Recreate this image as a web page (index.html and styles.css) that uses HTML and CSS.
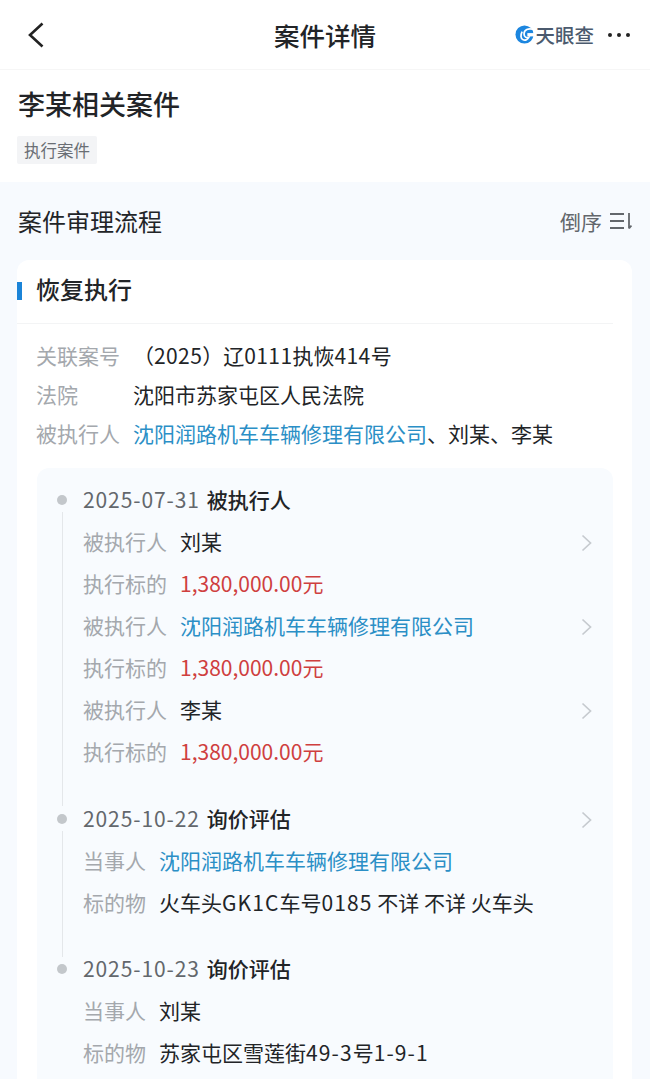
FILE: index.html
```html
<!DOCTYPE html>
<html lang="zh-CN">
<head>
  <meta charset="UTF-8" />
  <meta name="viewport" content="width=device-width, initial-scale=1.0" />
  <title>案件详情</title>
  <link rel="stylesheet" href="styles.css">
</head>
<body>
  <header class="topbar">
    <div class="topbar-left">
      <svg class="back-icon" viewBox="0 0 18 26"><path d="M15.5 1.5 3 13l12.5 11.5" /></svg>
    </div>
    <h1 class="topbar-title">案件详情</h1>
    <div class="topbar-right">
      <svg class="brand-logo" viewBox="0 0 20 20">
        <circle cx="10" cy="10" r="9.5" fill="#1c86df" />
        <path d="M19 4.5C14 3 9.500 5 9.500 9.500c0 3 2.500 4.500 5 3.500-1 2-3.500 3.500-6 2.500C5.500 14.500 6 10 7.500 7" fill="none" stroke="#fff" stroke-width="1.800" />
        <path d="M13 8.500h7v3.500h-7z" fill="#fff" />
      </svg>
      <span class="brand-name">天眼查</span>
      <span class="more-dots"><i></i><i></i><i></i></span>
    </div>
  </header>

  <section class="summary">
    <h2 class="summary-title">李某相关案件</h2>
    <span class="tag">执行案件</span>
  </section>

  <main class="process">
    <div class="process-head">
      <h3 class="process-title">案件审理流程</h3>
      <div class="sort">
        <span>倒序</span>
        <svg class="sort-icon" viewBox="0 0 23 18">
          <path d="M1 2h14M1 9h14M1 16h14" />
          <path d="M20 1v15.500M20 16.500l2.500-3" />
        </svg>
      </div>
    </div>

    <div class="card">
      <div class="card-head">
        <span class="card-mark"></span>
        <h4 class="card-title">恢复执行</h4>
      </div>

      <div class="info">
        <div class="info-row">
          <span class="label info-label">关联案号</span>
          <span class="value">（<span class="num">2025</span>）辽<span class="num">0111</span>执恢<span class="num">414</span>号</span>
        </div>
        <div class="info-row">
          <span class="label info-label">法院</span>
          <span class="value">沈阳市苏家屯区人民法院</span>
        </div>
        <div class="info-row">
          <span class="label info-label">被执行人</span>
          <span class="value"><span class="link">沈阳润路机车车辆修理有限公司</span>、刘某、李某</span>
        </div>
      </div>

      <div class="timeline">
        <div class="event">
          <div class="row event-head">
            <span class="date">2025-07-31</span>
            <span class="event-name">被执行人</span>
          </div>
          <div class="row">
            <span class="label">被执行人</span>
            <span class="value">刘某</span>
            <svg class="chevron" viewBox="0 0 11 18"><path d="M1.500 1.500 9.500 9l-8 7.500" /></svg>
          </div>
          <div class="row">
            <span class="label">执行标的</span>
            <span class="value money">1,380,000.00元</span>
          </div>
          <div class="row">
            <span class="label">被执行人</span>
            <span class="value link">沈阳润路机车车辆修理有限公司</span>
            <svg class="chevron" viewBox="0 0 11 18"><path d="M1.500 1.500 9.500 9l-8 7.500" /></svg>
          </div>
          <div class="row">
            <span class="label">执行标的</span>
            <span class="value money">1,380,000.00元</span>
          </div>
          <div class="row">
            <span class="label">被执行人</span>
            <span class="value">李某</span>
            <svg class="chevron" viewBox="0 0 11 18"><path d="M1.500 1.500 9.500 9l-8 7.500" /></svg>
          </div>
          <div class="row">
            <span class="label">执行标的</span>
            <span class="value money">1,380,000.00元</span>
          </div>
        </div>

        <div class="event">
          <div class="row event-head">
            <span class="date">2025-10-22</span>
            <span class="event-name">询价评估</span>
            <svg class="chevron" viewBox="0 0 11 18"><path d="M1.500 1.500 9.500 9l-8 7.500" /></svg>
          </div>
          <div class="row">
            <span class="label">当事人</span>
            <span class="value link">沈阳润路机车车辆修理有限公司</span>
          </div>
          <div class="row">
            <span class="label">标的物</span>
            <span class="value">火车头<span class="num-wide">GK1C</span>车号<span class="num-wide">0185</span> 不详 不详 火车头</span>
          </div>
        </div>

        <div class="event">
          <div class="row event-head">
            <span class="date">2025-10-23</span>
            <span class="event-name">询价评估</span>
          </div>
          <div class="row">
            <span class="label">当事人</span>
            <span class="value">刘某</span>
          </div>
          <div class="row">
            <span class="label">标的物</span>
            <span class="value">苏家屯区雪莲街<span class="num-wide">49-3</span>号<span class="num-wide">1-9-1</span></span>
          </div>
        </div>
      </div>
    </div>
  </main>
</body>
</html>
```

FILE: styles.css
```css
:root {
  --text-color: #222427;
  --label-color: #a4a8ad;
  --muted-color: #63676c;
  --link-color: #2b8fc6;
  --money-color: #cf3f3f;
  --page-bg: #f7fafe;
  --panel-bg: #f8fbfe;
  --line-color: #e4e7ea;
}
html,
body {
  height: 100%;
}
body {
  margin: 0;
  overflow: hidden;
  background-color: var(--page-bg);
  color: var(--text-color);
  font-family: "Noto Sans CJK SC", "Noto Sans", sans-serif;
  font-size: 21px;
}
h1,
h2,
h3,
h4 {
  margin: 0;
  font-weight: 400;
}

.topbar {
  display: grid;
  grid-template-columns: 1fr auto 1fr;
  align-items: center;
  height: 69px;
  padding: 0 20px;
  background-color: #fff;
  border-bottom: 1px solid #f6f6f6;
}
.back-icon {
  display: block;
  width: 18px;
  height: 26px;
  margin-left: 7px;
}
.back-icon path {
  fill: none;
  stroke: #222;
  stroke-width: 2.600;
}
.topbar-title {
  font-size: 25.500px;
  font-weight: 500;
  line-height: 34px;
}
.topbar-right {
  display: flex;
  align-items: center;
  justify-content: flex-end;
}
.brand-logo {
  width: 19px;
  height: 19px;
  margin-right: 1px;
}
.brand-name {
  font-size: 19.500px;
  font-weight: 500;
  line-height: 26px;
  color: #4b5a6e;
}
.more-dots {
  display: flex;
  gap: 5px;
  margin-left: 14px;
}
.more-dots i {
  width: 4px;
  height: 4px;
  border-radius: 50%;
  background-color: #222;
}

.summary {
  height: 112px;
  padding: 0 18px;
  background-color: #fff;
}
.summary-title {
  padding-top: 15px;
  font-size: 27px;
  font-weight: 500;
  line-height: 38px;
}
.tag {
  display: inline-block;
  margin: 13px 0 0 -1px;
  padding: 0 7px;
  background-color: #f3f4f6;
  border-radius: 2px;
  color: #6a6e74;
  font-size: 16.500px;
  line-height: 28px;
}

.process-head {
  display: flex;
  align-items: center;
  justify-content: space-between;
  height: 78px;
  padding: 0 18px;
}
.process-title {
  font-size: 24px;
  line-height: 34px;
}
.sort {
  display: flex;
  align-items: center;
  gap: 7px;
  color: var(--muted-color);
}
.sort-icon {
  width: 23px;
  height: 18px;
}
.sort-icon path {
  fill: none;
  stroke: var(--muted-color);
  stroke-width: 1.800;
}

.card {
  margin: 0 18px 0 17px;
  background-color: #fff;
  border-radius: 12px 12px 0 0;
}
.card-head {
  display: flex;
  align-items: center;
  height: 63px;
  margin-right: 19px;
  border-bottom: 1px solid #f3f4f5;
}
.card-mark {
  width: 5px;
  height: 18px;
  margin: 0 15px 2px 0;
  background-color: #1b84d8;
}
.card-title {
  padding-bottom: 6px;
  margin-left: -1px;
  font-size: 24px;
  font-weight: 500;
  line-height: 34px;
}

.info {
  padding: 11px 0 16px 19px;
}
.info-row {
  display: flex;
  height: 39px;
  align-items: center;
}
.label {
  color: var(--label-color);
  margin-right: 13px;
}
.info-label {
  width: 84px;
}
.link {
  color: var(--link-color);
}
.money {
  color: var(--money-color);
}
.num {
  letter-spacing: 0.400px;
}
.num-wide {
  letter-spacing: 1.100px;
}

.timeline {
  margin: 0 19px 0 20px;
  padding: 11px 21px 20px 46px;
  background-color: var(--panel-bg);
  border-radius: 12px 12px 0 0;
}
.event {
  position: relative;
  margin-bottom: 24.500px;
}
.event:last-child {
  margin-bottom: 0;
}
.event::before {
  content: "";
  position: absolute;
  left: -26px;
  top: 16px;
  width: 10px;
  height: 10px;
  border-radius: 50%;
  background-color: #c3c7cb;
}
.event::after {
  content: "";
  position: absolute;
  left: -21.500px;
  top: 33px;
  bottom: -33px;
  width: 1.500px;
  background-color: var(--line-color);
}
.event:last-child::after {
  display: none;
}
.row {
  display: flex;
  align-items: center;
  height: 42px;
}
.row > span {
  padding-bottom: 2px;
}
.date {
  color: var(--muted-color);
  letter-spacing: 0.900px;
  margin-right: 7px;
}
.event-name {
  font-weight: 500;
}
.chevron {
  width: 11px;
  height: 18px;
  margin: 2px 0 0 auto;
}
.chevron path {
  fill: none;
  stroke: #c6cacf;
  stroke-width: 1.700;
}
```
